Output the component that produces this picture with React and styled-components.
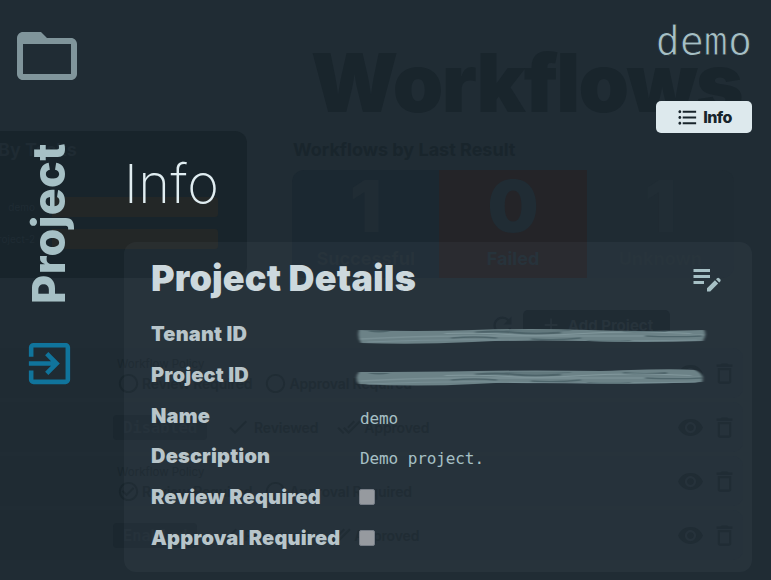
import React from "react";
import styled, { createGlobalStyle } from "styled-components";
import {
  MdFolderOpen, MdExitToApp, MdFormatListBulleted, MdEditNote, MdDeleteOutline,
  MdVisibility, MdRefresh, MdAdd, MdRadioButtonUnchecked, MdCheckCircleOutline,
  MdCheck, MdDoneAll,
} from "react-icons/md";

const Global = createGlobalStyle`
  * { box-sizing: border-box; }
  html, body { margin: 0; background: #202c34; overflow: hidden; }
  body { font-family: Inter, sans-serif; }
  svg { display: block; flex: none; }
`;

const Stage = styled.main`
  display: grid;
  width: 771px;
  height: 580px;
  overflow: hidden;
  background: #202c34;
  white-space: nowrap;
`;
const Layer = styled.div`
  grid-area: 1 / 1;
  width: 771px;
  height: 580px;
  min-width: 0;
  overflow: hidden;
`;

/* Dimmed page */
const Backdrop = styled(Layer)`
  color: #19252c;
`;
const PageTitle = styled.h1`
  margin: 0;
  padding: 34px 29px 0 0;
  height: 131px;
  text-align: right;
  font-size: 81px;
  line-height: 98px;
  font-weight: 900;
  letter-spacing: -1.7px;
`;
const Summary = styled.div`
  display: flex;
  gap: 45px;
  height: 179px;
`;
const TasksCard = styled.section`
  width: 247px;
  height: 147px;
  border-radius: 0 12px 12px 0;
  background: #18242b;
  color: #1f2b33;
`;
const CardTitle = styled.h3`
  margin: 0 0 0 -2px;
  padding-top: 7px;
  height: 66px;
  font-size: 18px;
  line-height: 23px;
  font-weight: 700;
`;
const TaskBar = styled.div`
  display: flex;
  align-items: center;
  height: 20px;
  margin-bottom: 12px;
  font-size: 10px;
`;
const TaskName = styled.span`
  width: 35px;
  display: flex;
  justify-content: flex-end;
`;
const Bar = styled.span`
  width: 166px;
  height: 20px;
  margin-left: 17px;
  border-radius: 0 3px 3px 0;
  background: #232727;
`;
const Results = styled.section`
  width: 442px;
`;
const ResultsTitle = styled.h3`
  margin: 0 0 0 1px;
  padding-top: 7px;
  height: 39px;
  font-size: 18px;
  line-height: 23px;
  font-weight: 700;
`;
const Cells = styled.div`
  display: flex;
  height: 108px;
  border-radius: 12px;
  overflow: hidden;
`;
const Cell = styled.div`
  flex: 1;
  text-align: center;
  background: ${(p) => p.$bg};
  color: ${(p) => p.$fg};
`;
const Count = styled.div`
  height: 74px;
  font-size: 72px;
  line-height: 72px;
  font-weight: 900;
`;
const CellLabel = styled.div`
  font-size: 18px;
  line-height: 30px;
  font-weight: 700;
  color: ${(p) => p.$fg};
`;
const Actions = styled.div`
  display: flex;
  justify-content: flex-end;
  align-items: center;
  gap: 7px;
  height: 30px;
  padding-right: 101px;
`;
const AddButton = styled.div`
  display: flex;
  align-items: center;
  justify-content: center;
  gap: 6px;
  width: 147px;
  height: 30px;
  border-radius: 5px;
  background: #18242b;
  color: #202c34;
  font-size: 15px;
  font-weight: 700;
`;
const Rows = styled.div`
  display: grid;
  grid-auto-rows: 50px;
  row-gap: 4px;
  margin-top: 8px;
  width: 743px;
`;
const Row = styled.div`
  display: flex;
  align-items: center;
  justify-content: space-between;
  padding: 0 5px 0 113px;
  border-radius: 0 10px 10px 0;
  background: #1f2b33;
`;
const Policy = styled.div`
  padding: 6px 0 0 4px;
`;
const PolicyTitle = styled.div`
  font-size: 11.5px;
  line-height: 15px;
`;
const Flags = styled.div`
  display: flex;
  align-items: center;
  gap: ${(p) => p.$gap};
`;
const Flag = styled.div`
  display: flex;
  align-items: center;
  gap: ${(p) => p.$gap || "2px"};
  font-size: 14px;
  letter-spacing: -0.15px;
  font-weight: 600;
`;
const Pill = styled.div`
  display: grid;
  place-items: center;
  width: ${(p) => p.$w};
  height: 25px;
  border-radius: 4px;
  background: #1b272f;
  color: #1f2b33;
  font: 700 16px "DejaVu Sans Mono", monospace;
  letter-spacing: -0.4px;
`;
const RowActions = styled.div`
  display: flex;
  gap: 7px;
`;

/* Dialog on top of the page */
const Dialog = styled(Layer)`
  display: grid;
  grid-template-columns: 124px 628px;
`;
const Side = styled.aside`
  display: flex;
  flex-direction: column;
  padding: 20px 0 0 11px;
  color: #80959b;
`;
const SideTitle = styled.h2`
  margin: 45px 0 0 8px;
  height: 167px;
  width: 60px;
  line-height: 60px;
  writing-mode: vertical-rl;
  transform: rotate(180deg);
  font-size: 45px;
  font-weight: 800;
  letter-spacing: 0.3px;
  color: #a6c0c5;
`;
const Leave = styled.div`
  margin: 32px 0 0 11px;
  color: #10749c;
`;
const Content = styled.div`
  display: flex;
  flex-direction: column;
`;
const Top = styled.header`
  display: flex;
  flex-direction: column;
  align-items: flex-end;
  height: 133px;
`;
const ProjectName = styled.div`
  height: 101px;
  padding: 17px 0 0;
  font: 400 40px/48px "DejaVu Sans Mono", monospace;
  color: #a6c0c5;
  -webkit-text-stroke: 0.9px #202c34;
`;
const Tab = styled.button`
  display: flex;
  align-items: center;
  justify-content: center;
  gap: 4px;
  width: 96px;
  height: 32px;
  padding: 0;
  border: 0;
  border-radius: 5px;
  background: #dde9ed;
  color: #18242b;
  font: 800 16px Inter, sans-serif;
  letter-spacing: -0.6px;
`;
const Heading = styled.h2`
  margin: 0;
  height: 109px;
  padding-top: 18px;
  font-size: 54px;
  line-height: 66px;
  font-weight: 200;
  letter-spacing: 0.5px;
  color: #e0edf1;
`;
const Panel = styled.section`
  height: 330px;
  padding: 18px 27px 0 27px;
  border-radius: 12px;
  background: rgba(150, 170, 180, 0.06);
`;
const PanelHead = styled.div`
  display: flex;
  justify-content: space-between;
  height: 53.4px;
  color: #a6c0c5;
`;
const PanelTitle = styled.h3`
  margin: -4px 0 0;
  font-size: 36px;
  line-height: 44px;
  font-weight: 900;
  letter-spacing: 0.15px;
  color: #ccd8dd;
`;
const Fields = styled.div`
  display: grid;
  grid-template-columns: 204px 1fr;
  grid-auto-rows: 40.85px;
  align-items: center;
`;
const Label = styled.div`
  font-size: 20px;
  line-height: 24px;
  font-weight: 900;
  letter-spacing: 0.18px;
  color: #b8c5ca;
`;
const Value = styled.div`
  padding: 5px 0 0 5px;
  font: 400 16px "DejaVu Sans Mono", monospace;
  letter-spacing: -0.1px;
  color: #a6c0c5;
`;
const Check = styled.div`
  width: 16px;
  height: 16px;
  margin-left: 4px;
  border-radius: 2px;
  border: 1px solid #777e87;
  background: #969a9f;
`;
const Smear = styled.svg`
  margin-top: 5px;
  overflow: visible;
`;

function Redacted({ id, d, y = 0 }) {
  return (
    <Smear width="353" height="20" viewBox="0 0 353 20">
      <defs>
        <filter id={id} x="-3%" y="-30%" width="106%" height="160%">
          <feGaussianBlur stdDeviation="1.5 0.6" />
        </filter>
        <clipPath id={`${id}-c`}><path d={d} /></clipPath>
      </defs>
      <g filter={`url(#${id})`}>
        <path d={d} fill="#6c8287" />
        <g clipPath={`url(#${id}-c)`} fill="none" transform={`translate(0 ${y})`}>
          <path d="M14 4.5q10 2 20 0M120 6.5q22 -2 40 0t46 0M268 5q22 2 44 0" stroke="#4d6369" strokeWidth="1.8" />
          <path d="M5 13q56 -3 105 -3t68 0t77 0t95 -1" stroke="#7a9095" strokeWidth="1.3" />
          <path d="M96 12q24 -2 46 0M176 13q24 2 50 -1M290 10q30 1 57 0" stroke="#50666c" strokeWidth="1.5" />
          <path d="M12 16q78 -3 130 -2t92 1t108 -1" stroke="#788f95" strokeWidth="1.2" />
          <path d="M90 7.5q35 -1 63 1t75 -1t108 0" stroke="#82989d" strokeWidth="1" />
          <path d="M150 4.5q35 1 66 0M232 14.5q24 1 44 0" stroke="#596f75" strokeWidth="1.2" />
        </g>
      </g>
    </Smear>
  );
}

function PolicyRow({ ReviewIcon }) {
  return (
    <Row>
      <Policy>
        <PolicyTitle>Workflow Policy</PolicyTitle>
        <Flags $gap="12px">
          <Flag><ReviewIcon size={23} />Review Required</Flag>
          <Flag><MdRadioButtonUnchecked size={23} />Approval Required</Flag>
        </Flags>
      </Policy>
      <RowActions><MdVisibility size={27} /><MdDeleteOutline size={27} /></RowActions>
    </Row>
  );
}

function StatusRow({ label, width }) {
  return (
    <Row>
      <Flags $gap="19px">
        <Pill $w={width}>{label}</Pill>
        <Flag $gap="4px"><MdCheck size={24} />Reviewed</Flag>
        <Flag $gap="3px"><MdDoneAll size={24} />Approved</Flag>
      </Flags>
      <RowActions><MdVisibility size={27} /><MdDeleteOutline size={27} /></RowActions>
    </Row>
  );
}

export default function App() {
  return (
    <Stage>
      <Global />
      <Backdrop>
        <PageTitle>Workflows</PageTitle>
        <Summary>
          <TasksCard>
            <CardTitle>By Tasks</CardTitle>
            <TaskBar><TaskName>demo</TaskName><Bar /></TaskBar>
            <TaskBar><TaskName>project-2</TaskName><Bar /></TaskBar>
          </TasksCard>
          <Results>
            <ResultsTitle>Workflows by Last Result</ResultsTitle>
            <Cells>
              <Cell $bg="#1b2831" $fg="#202c34"><Count>1</Count><CellLabel $fg="#202c34">Successful</CellLabel></Cell>
              <Cell $bg="#242428" $fg="#202c34"><Count>0</Count><CellLabel $fg="#202c34">Failed</CellLabel></Cell>
              <Cell $bg="#1f2b33" $fg="#212d35"><Count>1</Count><CellLabel $fg="#212d35">Unknown</CellLabel></Cell>
            </Cells>
          </Results>
        </Summary>
        <Actions><MdRefresh size={27} /><AddButton><MdAdd size={22} />Add Project</AddButton></Actions>
        <Rows>
          <PolicyRow ReviewIcon={MdRadioButtonUnchecked} />
          <StatusRow label="Disabled" width="94px" />
          <PolicyRow ReviewIcon={MdCheckCircleOutline} />
          <StatusRow label="Enabled" width="84px" />
        </Rows>
      </Backdrop>
      <Dialog>
        <Side>
          <MdFolderOpen size={72} />
          <SideTitle>Project</SideTitle>
          <Leave><MdExitToApp size={55} /></Leave>
        </Side>
        <Content>
          <Top>
            <ProjectName>demo</ProjectName>
            <Tab><MdFormatListBulleted size={23} />Info</Tab>
          </Top>
          <Heading>Info</Heading>
          <Panel>
            <PanelHead>
              <PanelTitle>Project Details</PanelTitle>
              <MdEditNote size={36} />
            </PanelHead>
            <Fields>
              <Label>Tenant ID</Label>
              <Redacted id="tenant" d="M4 4Q60 6 118 4T232 4T349 4Q352 8 348 15Q288 17 232 15T118 16T6 17Q2 12 4 4Z" />
              <Label>Project ID</Label>
              <Redacted id="project" y={1} d="M4 5Q66 5 122 4T246 4Q318 1 340 3Q350 7 347 15Q286 18 232 16T120 17T4 17Q-1 11 4 5Z" />
              <Label>Name</Label>
              <Value>demo</Value>
              <Label>Description</Label>
              <Value>Demo project.</Value>
              <Label>Review Required</Label>
              <Check />
              <Label>Approval Required</Label>
              <Check />
            </Fields>
          </Panel>
        </Content>
      </Dialog>
    </Stage>
  );
}
